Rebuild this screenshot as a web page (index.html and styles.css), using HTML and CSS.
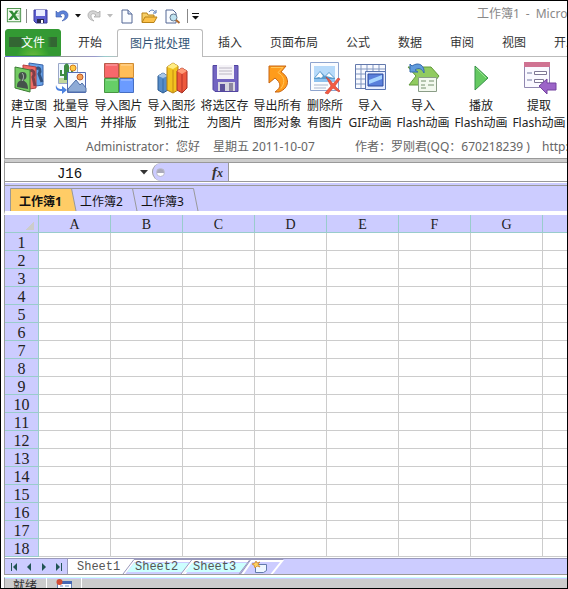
FILE: index.html
```html
<!DOCTYPE html>
<html lang="zh-CN">
<head>
<meta charset="utf-8">
<title>工作簿1 - Microsoft Excel</title>
<link rel="stylesheet" href="styles.css">
</head>
<body>
<div class="window">
  <header class="titlebar">
    <div class="quick">
      <svg class="q-excel" viewBox="0 0 16 18" aria-hidden="true"><rect x=".5" y=".5" width="15" height="15" fill="#f3fbf0" stroke="#3d8a3d"/><path d="M10 3h4v10h-4M10 6h4M10 9h4" fill="none" stroke="#9ac79a"/><path d="M2 3h4l2 3 2-3h3L9.500 8l4 5.500H9.500L7.500 10.500 5 13.500H1.500L6 8z" fill="#2f8b35"/></svg>
      <i class="sep"></i>
      <button class="q-btn q-save" aria-label="保存"><svg width="15" height="15" viewBox="0 0 15 15"><path d="M1 1h13v13H3l-2-2z" fill="#5d5fd0" stroke="#3a3a9c"/><path d="M3 1h9v6H3z" fill="#e9edff"/><path d="M4 10h7v4H4z" fill="#26264d"/><path d="M8 11h2v3H8z" fill="#fff"/></svg></button>
      <button class="q-btn q-undo" aria-label="撤消"><svg width="14" height="14" viewBox="0 0 14 14"><path d="M1 2v6h6L5 6c3-2.500 5-1 5 1 0 2-1 3-3 5 4-1 6-3 6-6 0-4-6-6-10-2z" fill="#5c82d8" stroke="#3a58aa" stroke-width=".6"/></svg></button>
      <button class="q-btn q-caret" aria-label="撤消列表"><svg width="6" height="4" viewBox="0 0 6 4"><path d="M0 0h6L3 3.500z" fill="#111"/></svg></button>
      <button class="q-btn q-redo" aria-label="恢复"><svg width="14" height="14" viewBox="0 0 14 14"><path d="M13 2v6H7l2-2C6 3.500 4 5 4 7c0 2 1 3 3 5-4-1-6-3-6-6 0-4 6-6 10-2z" fill="#d5d5d5" stroke="#aaa" stroke-width=".8"/></svg></button>
      <button class="q-btn q-caret2" aria-label="恢复列表"><svg width="6" height="4" viewBox="0 0 6 4"><path d="M0 0h6L3 3.500z" fill="#bbb"/></svg></button>
      <button class="q-btn q-new" aria-label="新建"><svg width="12" height="15" viewBox="0 0 12 15"><path d="M1 1h6l4 4v9H1z" fill="#fafcff" stroke="#526794"/><path d="M7 1v4h4" fill="#cbd8ef" stroke="#526794"/></svg></button>
      <button class="q-btn q-open" aria-label="打开"><svg width="17" height="15" viewBox="0 0 17 15"><path d="M1 13V4h5l1 2h6v3" fill="#f6cf68" stroke="#b98318"/><path d="M1 13.500 4 8h12l-3 5.500z" fill="#fbc14a" stroke="#b98318"/><path d="M8 3c2-3 5-2 6 0M15 1v3h-3" fill="none" stroke="#4a72b4"/></svg></button>
      <button class="q-btn q-preview" aria-label="打印预览"><svg width="16" height="15" viewBox="0 0 16 15"><path d="M1 1h7l3 3v10H1z" fill="#fafcff" stroke="#526794"/><circle cx="8.500" cy="8.500" r="3.500" fill="#bfe3f0" stroke="#65798f"/><path d="m11 11 3.500 3" stroke="#b26a2a" stroke-width="2"/></svg></button>
      <i class="sep"></i>
      <button class="q-btn q-more" aria-label="自定义快速访问工具栏"><svg width="7" height="7" viewBox="0 0 7 7"><path d="M0 0h7v1H0zM0 3h7L3.500 6.500z" fill="#111"/></svg></button>
    </div>
    <h1 class="title">工作簿1&ensp;-&ensp;Microsoft Excel</h1>
  </header>

  <nav class="tabs">
    <button class="file-tab">文件</button>
    <button class="tab">开始</button>
    <button class="tab active">图片批处理</button>
    <button class="tab">插入</button>
    <button class="tab">页面布局</button>
    <button class="tab">公式</button>
    <button class="tab">数据</button>
    <button class="tab">审阅</button>
    <button class="tab">视图</button>
    <button class="tab">开发工具</button>
  </nav>

  <section class="ribbon">
    <div class="tools">
      <button class="tool">
        <svg viewBox="0 0 32 32"><path d="M16 1l14 2v20l-14 2z" fill="#69a4ea" stroke="#3b62a8"/><path d="M23 7c4-3 5 2 3 5l3 8" fill="none" stroke="#33527f" stroke-width="3"/><path d="M10 3l13 2v21l-13 2z" fill="#f06d68" stroke="#b34040"/><path d="M17 9c4-2 5 3 3 6l2 9" fill="none" stroke="#7e3d48" stroke-width="3"/><path d="M2 5l15 3v22L2 26z" fill="#74cc63" stroke="#3c7d35"/><circle cx="9.500" cy="14" r="4" fill="#45534b"/><path d="M4 25c0-7 3-5 5-8 3 3 6 3 6 10z" fill="#45534b"/><path d="M9 11c2 2 2 5 0 8" stroke="#b8c4bd" fill="none"/></svg>
        <span>建立图<br>片目录</span></button>
      <button class="tool">
        <svg viewBox="0 0 32 32"><path d="M3.500 1.500h19v20h-19z" fill="#f0f8ff" stroke="#9aa7c8"/><path d="M4 16h18v5H4z" fill="#c1d79b"/><path d="M10 18V4q2-3 3 0v14M6 8v5h5M17 7v5h-4" fill="none" stroke="#3d8b42" stroke-width="2"/><path d="M11.500 3v15" stroke="#3d8b42" stroke-width="3"/><circle cx="18" cy="6" r="3" fill="#ffcb47" stroke="#cf7a20"/><path d="M12.500 10.500h18v20h-18z" fill="#f5f9ff" stroke="#536db5"/><path d="m13 27 8-9 4 5 2-2 4 5v4H13z" fill="#8eabd6" stroke="#4e6fa8"/><circle cx="25" cy="15" r="3" fill="#f5a153" stroke="#bb572a"/><path d="M1 23c1 4 4 4 6 4v-3l5 4-5 4v-3c-4 0-7-1-6-6z" fill="#4b82e0"/></svg>
        <span>批量导<br>入图片</span></button>
      <button class="tool wide">
        <svg viewBox="0 0 32 32"><path d="M1.500 1.500h14v14h-14z" fill="#f8686b" stroke="#b85b4a"/><path d="M16.500 1.500h14v14h-14z" fill="#ffbd58" stroke="#cf8c35"/><path d="M1.500 16.500h14v14h-14z" fill="#66cf67" stroke="#479642"/><path d="M16.500 16.500h14v14h-14z" fill="#6b9bff" stroke="#466fc2"/><path d="M3 3h11M18 3h11M3 18h11M18 18h11" stroke="#fff" opacity=".45"/></svg>
        <span>导入图片<br>并排版</span></button>
      <button class="tool wide">
        <svg viewBox="0 0 32 32"><path d="m2 14 5-3 5 3v14l-5 3-5-3z" fill="#568cc8" stroke="#29598f"/><path d="m2 14 5 2 5-2-5-3z" fill="#a9c7e8"/><path d="M7 17v13" stroke="#356aa4"/><path d="m11 5 6-4 5 3v24l-5 3-6-3z" fill="#f2c31f" stroke="#b37e13"/><path d="m11 5 6 2 5-3-5-3z" fill="#ffed83"/><path d="M17 8v22" stroke="#c48a13"/><path d="m21 9 5-3 5 3v17l-5 5-5-3z" fill="#ed593c" stroke="#a63025"/><path d="m21 9 5 3 5-3-5-3z" fill="#ff9b77"/><path d="M26 12v18" stroke="#b53327"/></svg>
        <span>导入图形<br>到批注</span></button>
      <button class="tool wide">
        <svg viewBox="0 0 32 32"><path d="M4 3.500h25v26H6l-2-2z" fill="#7264c1" stroke="#5145a0"/><path d="M8 3h17v14H8z" fill="#f5f3f8"/><path d="M10 6h13M10 9h13M10 12h13" stroke="#bbb6c3"/><path d="M9 20h17v9H9z" fill="#d8d6df"/><path d="M11 22h5v7h-5z" fill="#5d529b"/><path d="M20 21h4v8h-4z" fill="#8c87a0"/></svg>
        <span>将选区存<br>为图片</span></button>
      <button class="tool wide">
        <svg viewBox="0 0 32 32"><path d="M7 4h17l-5 6c9 5 9 16-2 20h-4c7-5 6-9 0-14l-6 5z" fill="#ff9c1b" stroke="#c76616"/><path d="M9 5.500h12l-5 5c6 4 8 9 3 16" fill="none" stroke="#ffc65b"/></svg>
        <span>导出所有<br>图形对象</span></button>
      <button class="tool">
        <svg viewBox="0 0 32 32"><path d="M1.500 .500h28v28h-28z" fill="#fafcff" stroke="#8ea4ce"/><path d="M5 4h21v16H5z" fill="#b7dafa"/><path d="m5 16 6-7 5 5 4-4 6 6v4H5z" fill="#5a9bcd"/><path d="m6 16 5-6 3 4-2 2-2-1zm11-2 3-3 5 5-4-1z" fill="#fff"/><path d="M5 17h21v3H5z" fill="#8ec2ef"/><path d="M5 23h14M5 26h12" stroke="#aab7ce"/><path d="m17 15 4 3 3 4 5-6 2 1-5 7 5 5-1 1-6-4-5 6-3-1 6-7z" fill="#f35c43" stroke="#ca382b" stroke-width=".6"/></svg>
        <span>删除所<br>有图片</span></button>
      <button class="tool medium">
        <svg viewBox="0 0 32 32"><path d="M1.500 2.500h30v24h-30z" fill="#f8faff" stroke="#6379ac"/><path d="M2 7h29M2 12h29M2 17h29M2 22h29M7 3v23M13 3v23M19 3v23M25 3v23" stroke="#8196c0"/><path d="M11.500 9.500h20v18h-20z" fill="#e6edff" stroke="#5874b0"/><path d="M14 12h15v12H14z" fill="#597fdb" stroke="#304e9f"/><path d="m15 18 13-5v4l-13 5z" fill="#a7d5ff"/></svg>
        <span>导入<br>GIF动画</span></button>
      <button class="tool flash">
        <svg viewBox="0 0 32 32"><path d="M1 5h23l8 9-7 9H2l7-9z" fill="#91cb60" stroke="#629a3b"/><path d="M3 2v8h8L8 8c4-3 7-1 9 3 1-7-5-12-12-7z" fill="#609bdc" stroke="#376bae"/><path d="M11.500 15.500h18v14h-18z" fill="#f3f9ef" stroke="#8a9d87"/><path d="M14 19h5m3 0h5M14 23h4m3 0h6M14 26h5" stroke="#75906d"/></svg>
        <span>导入<br>Flash动画</span></button>
      <button class="tool flash">
        <svg viewBox="0 0 32 32"><path d="m10 4 13 12-13 12z" fill="#65c961" stroke="#38934a"/><path d="m11 6 10 10" stroke="#9de793"/></svg>
        <span>播放<br>Flash动画</span></button>
      <button class="tool flash">
        <svg viewBox="0 0 32 32"><path d="M1.500 .500h25v25h-25z" fill="#faf9ff" stroke="#9188b1"/><path d="M1 0h26v5H1z" fill="#cf7292"/><path d="M4 11h5M4 18h5" stroke="#7378a0"/><path d="M11.500 9.500h12v3h-12zm0 8h9v3h-9z" fill="#fff" stroke="#7e7795"/><path d="m16 24 8-7v4h9v7h-9v4z" fill="#9c64c8" stroke="#7442a0"/></svg>
        <span>提取<br>Flash动画</span></button>
    </div>
    <div class="info"><span>Administrator：您好</span><span>星期五 2011-10-07</span><span>作者：罗刚君(QQ：670218239 )</span><span>http://</span></div>
  </section>

  <section class="formula">
    <input class="name-box" aria-label="名称框" value="J16">
    <button class="name-drop" aria-label="名称列表"><svg width="8" height="5" viewBox="0 0 8 5"><path d="M0 0h8L4 4.500z" fill="#333"/></svg></button>
    <div class="fx-area"><i class="knob"></i><button class="fx" aria-label="插入函数">f<small>x</small></button></div>
    <input class="formula-input" aria-label="编辑栏">
  </section>

  <nav class="books">
    <button class="book current"><svg viewBox="0 0 67 23"><path d="M.5 23V.500H61.500L66 23" fill="#fc6" stroke="#999"/></svg><span>工作簿1</span></button>
    <button class="book"><svg viewBox="0 0 67 23"><path d="M0 .500H61.500L66 23" fill="none" stroke="#999"/></svg><span>工作簿2</span></button>
    <button class="book"><svg viewBox="0 0 67 23"><path d="M0 .500H61.500L66 23" fill="none" stroke="#999"/></svg><span>工作簿3</span></button>
  </nav>

  <main class="sheet">
    <table>
      <colgroup><col class="row-col"><col><col><col><col><col><col><col><col></colgroup>
      <thead><tr><th aria-label="全选"><i class="corner"></i></th><th>A</th><th>B</th><th>C</th><th>D</th><th>E</th><th>F</th><th>G</th><th></th></tr></thead>
      <tbody>
        <tr><th>1</th><td></td><td></td><td></td><td></td><td></td><td></td><td></td><td></td></tr>
        <tr><th>2</th><td></td><td></td><td></td><td></td><td></td><td></td><td></td><td></td></tr>
        <tr><th>3</th><td></td><td></td><td></td><td></td><td></td><td></td><td></td><td></td></tr>
        <tr><th>4</th><td></td><td></td><td></td><td></td><td></td><td></td><td></td><td></td></tr>
        <tr><th>5</th><td></td><td></td><td></td><td></td><td></td><td></td><td></td><td></td></tr>
        <tr><th>6</th><td></td><td></td><td></td><td></td><td></td><td></td><td></td><td></td></tr>
        <tr><th>7</th><td></td><td></td><td></td><td></td><td></td><td></td><td></td><td></td></tr>
        <tr><th>8</th><td></td><td></td><td></td><td></td><td></td><td></td><td></td><td></td></tr>
        <tr><th>9</th><td></td><td></td><td></td><td></td><td></td><td></td><td></td><td></td></tr>
        <tr><th>10</th><td></td><td></td><td></td><td></td><td></td><td></td><td></td><td></td></tr>
        <tr><th>11</th><td></td><td></td><td></td><td></td><td></td><td></td><td></td><td></td></tr>
        <tr><th>12</th><td></td><td></td><td></td><td></td><td></td><td></td><td></td><td></td></tr>
        <tr><th>13</th><td></td><td></td><td></td><td></td><td></td><td></td><td></td><td></td></tr>
        <tr><th>14</th><td></td><td></td><td></td><td></td><td></td><td></td><td></td><td></td></tr>
        <tr><th>15</th><td></td><td></td><td></td><td></td><td></td><td></td><td></td><td></td></tr>
        <tr><th>16</th><td></td><td></td><td></td><td></td><td></td><td></td><td></td><td></td></tr>
        <tr><th>17</th><td></td><td></td><td></td><td></td><td></td><td></td><td></td><td></td></tr>
        <tr><th>18</th><td></td><td></td><td></td><td></td><td></td><td></td><td></td><td></td></tr>
      </tbody>
    </table>
  </main>

  <nav class="sheets">
    <div class="pager">
      <button aria-label="第一张"><svg viewBox="0 0 8 8"><path d="M1 0h1v8H1zM7 0v8L3 4z"/></svg></button>
      <button aria-label="上一张"><svg viewBox="0 0 8 8"><path d="M6 0v8L2 4z"/></svg></button>
      <button aria-label="下一张"><svg viewBox="0 0 8 8"><path d="M2 0v8l4-4z"/></svg></button>
      <button aria-label="最后一张"><svg viewBox="0 0 8 8"><path d="M6 0h1v8H6zM1 0v8l4-4z"/></svg></button>
    </div>
    <button class="leaf"><svg viewBox="0 0 72 16"><path d="M0 0H67L56 16H0z" fill="#fff"/></svg><span>Sheet1</span></button>
    <button class="leaf"><svg viewBox="0 0 72 16"><path d="M8 4H64L56 13H1z" fill="#cff"/><path d="M-2 15 8 2H68" fill="none" stroke="#fff" stroke-width="2"/><path d="M-3 15 8 .500H67L56 15.500" fill="none" stroke="#99b"/><path d="m69 0-11 16" stroke="#fff" stroke-width="2"/></svg><span>Sheet2</span></button>
    <button class="leaf"><svg viewBox="0 0 72 16"><path d="M8 4H64L56 13H1z" fill="#cff"/><path d="M-2 15 8 2H68" fill="none" stroke="#fff" stroke-width="2"/><path d="M-3 15 8 .500H67L56 15.500" fill="none" stroke="#99b"/><path d="m69 0-11 16" stroke="#fff" stroke-width="2"/></svg><span>Sheet3</span></button>
    <button class="leaf add" aria-label="插入工作表"><svg viewBox="0 0 72 16"><path d="M-3 15 8 .500H41L30 15.500" fill="none" stroke="#99b"/><path d="M9 2h31L29 16" fill="none" stroke="#fff" stroke-width="2"/><path d="M13.500 5.500h11v6l-3 2h-8z" fill="#eef6ff" stroke="#627aac"/><path d="m14 2 1 2 3-1-2 2 2 3-3-1-2 2-1-3-2-1 3-1z" fill="#ffd15b" stroke="#c77b25" stroke-width=".7"/></svg></button>
  </nav>

  <footer class="status"><span class="ready">就绪</span><span class="macro"><svg width="16" height="14" viewBox="0 0 16 14"><path d="M1.500 2.500h14v11h-14z" fill="#f8faff" stroke="#6680b5"/><path d="M5 2h11v3H5z" fill="#4567b4"/><path d="M4 7h3m2 0h4M4 10h3m2 0h4" stroke="#7893c0"/><circle cx="3.500" cy="3" r="3" fill="#d24b34"/></svg></span></footer>
</div>
</body>
</html>
```
FILE: styles.css
```css
* { box-sizing: border-box; }
body {
  margin: 0;
  background: #fff;
  color: #333;
  font: 12px/16px "Noto Sans", "Noto Sans CJK SC", sans-serif;
}
button, input { font: inherit; color: inherit; margin: 0; padding: 0; border: 0; background: none; }
button { white-space: nowrap; }
svg { display: block; flex: none; overflow: visible; }

.window {
  display: flex;
  flex-direction: column;
  height: 100vh;
  overflow: hidden;
  border: 1px solid #000;
  padding-left: 3px;
}
.window > * { flex: none; }

/* Title bar */
.titlebar { display: flex; height: 28px; overflow: hidden; padding-left: 2px; }
.quick { display: flex; align-items: center; width: 471px; flex: none; padding-top: 2px; }
.q-excel { width: 16px; height: 16px; }
.sep { width: 1px; height: 14px; background: #888; margin: 0 6px 0 4px; }
.q-undo { margin-left: 7px; }
.q-caret { margin-left: 6px; }
.q-redo { margin-left: 6px; }
.q-caret2 { margin-left: 6px; }
.q-new { margin-left: 8px; }
.q-open { margin-left: 8px; }
.q-preview { margin-left: 7px; }
.quick .sep:nth-of-type(2) { margin: 0 4px 0 6px; }
.title { margin: 0; padding-top: 5px; font-size: 12px; font-weight: 400; color: #888; white-space: pre; }

/* Ribbon tabs */
.tabs {
  display: flex;
  height: 28px;
  overflow: hidden;
  margin-left: 1px;
  background: linear-gradient(90deg, #66c, #699 40px, #999 60px, #99c 90px, #9cc 100px, #bbb 115px, #bbb) bottom / 100% 1px no-repeat;
}
.file-tab {
  width: 56px;
  height: 27px;
  flex: none;
  margin-right: 3px;
  border: 1px solid #393;
  border-radius: 3px 3px 0 0;
  color: #fff;
  background:
    radial-gradient(ellipse at 50% 120%, #7b4 0, #4a3 30%, transparent 45%),
    linear-gradient(90deg, #363 12px, transparent 16px 38px, #363 42px) 3px 7px / 48px 10px no-repeat,
    #393;
}
.tab { flex: none; padding: 0 14px; }
.active {
  width: 86px;
  margin: 0 1px;
  padding: 0;
  border: 1px solid #bbb;
  border-bottom: 0;
  border-radius: 3px 3px 0 0;
  color: #357;
  background: #fff;
}

/* Ribbon */
.ribbon { height: 102px; overflow: hidden; border-left: 1px solid #999; border-bottom: 1px solid #999; }
.tools { display: flex; padding: 5px 0 0 3px; height: 81px; }
.tool { display: flex; flex-direction: column; align-items: center; flex: none; width: 42px; line-height: 17px; color: #222; }
.tool svg { width: 32px; height: 32px; margin-bottom: 3px; }
.wide { width: 53px; }
.medium { width: 48px; }
.flash { width: 58px; }
.info {
  display: grid;
  grid-template-columns: 127px 142px 187px 1fr;
  padding: 1px 0 0 81px;
  color: #666;
  font-family: "Noto Sans", "Noto Sans CJK TC", sans-serif;
  white-space: nowrap;
}

/* Formula bar */
.formula {
  display: flex;
  height: 27px;
  border-left: 1px solid #999;
  border-top: 3px solid #ccc;
  border-bottom: 1px solid #999;
  background: linear-gradient(#999 1px, transparent 1px 19px, #999 19px 20px, #fff 20px 21px, #ccf 21px);
  padding: 1px 0 4px;
}
.name-box { width: 129px; padding-top: 3px; text-align: center; font: 14px/16px "Liberation Mono", monospace; color: #111; }
.name-drop { width: 19px; display: grid; place-items: center; }
.fx-area { display: flex; align-items: center; justify-content: space-between; width: 77px; margin-left: -1px; padding: 0 5px 0 3px; background: #ccf; border: 1px solid #999; border-width: 0 1px 0 1px; border-radius: 9px 0 0 9px; }
.knob { width: 9px; height: 9px; border-radius: 5px; background: linear-gradient(#aab 4px, #fff 4px); border: 1px solid #bbc; }
.fx { font: italic bold 15px/16px "Liberation Serif", serif; }
.fx small { font-size: 12px; }
.formula-input { flex: 1; min-width: 0; }

/* Workbook tabs */
.books { display: flex; height: 29px; border-left: 1px solid #999; border-bottom: 4px solid #fff; background: #ccf; padding: 2px 0 0 5px; color: #111; }
.book { position: relative; width: 61px; height: 23px; padding: 4px 0 0 9px; text-align: left; }
.book svg { position: absolute; left: 0; top: 0; width: 67px; height: 23px; }
.book span { position: relative; }
.current { font-weight: 700; }

/* Grid */
.sheet { border-left: 1px solid #999; overflow: hidden; padding-bottom: 1px; }
table { table-layout: fixed; width: 610px; min-width: 100%; border-collapse: separate; border-spacing: 0; }
col { width: 72px; }
.row-col { width: 34px; }
th, td { height: 18px; padding: 0; border: 1px solid #ccc; border-width: 0 1px 1px 0; }
th { padding-top: 2px; background: #ccf; border-color: #9cc; font: 16px/15px "Liberation Serif", serif; color: #222; }
thead th { padding-top: 3px; font-size: 14px; line-height: 14px; }
.corner { display: block; width: 9px; height: 9px; margin-left: 20px; background: linear-gradient(135deg, transparent 50%, #ccc 50%); }

/* Sheet tabs */
.sheets { display: flex; height: 17px; border-left: 1px solid #999; border-top: 1px solid #99b; border-bottom: 1px solid #999; background: #ccf; overflow: hidden; }
.pager { display: flex; align-items: center; gap: 7px; width: 63px; padding-left: 5px; border-right: 1px solid #99b; }
.pager svg { width: 8px; height: 8px; fill: #255; }
.leaf { position: relative; width: 58px; height: 15px; padding: 2px 0 0 9px; text-align: left; font: 12px/13px "Liberation Mono", monospace; color: #555; }
.leaf svg { position: absolute; left: 0; top: 0; width: 72px; height: 16px; }
.leaf span { position: relative; }

/* Status bar */
.status { display: flex; height: 20px; margin-top: 2px; border-left: 1px solid #999; border-top: 1px solid #cff; background: linear-gradient(#ccf 1px, #ccc 1px); }
.ready { width: 42px; padding-left: 8px; border-right: 1px solid #fff; }
.macro { width: 35px; padding: 1px 0 0 9px; border-right: 1px solid #fff; }
```
